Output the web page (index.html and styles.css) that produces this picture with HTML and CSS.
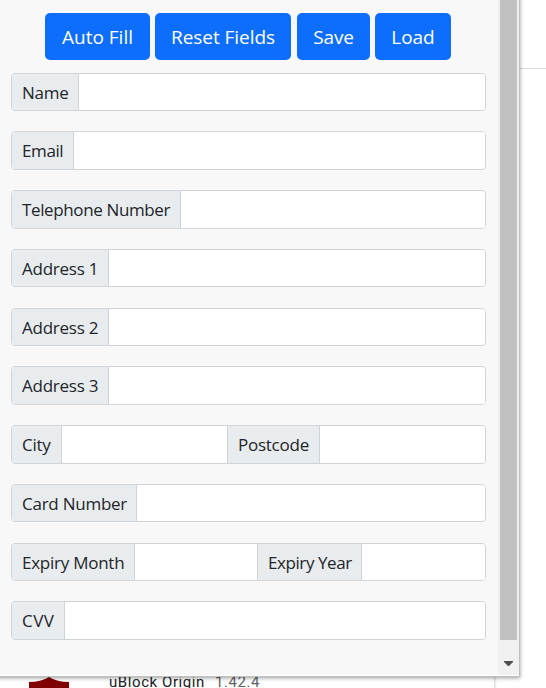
FILE: index.html
```html
<!DOCTYPE html>
<html lang="en">
<head>
<meta charset="utf-8">
<title>Auto Fill</title>
<link rel="stylesheet" href="styles.css">
</head>
<body>
<div class="toolbar-line"></div>
<section class="extension-card">
  <svg class="shield" width="40" height="11" viewBox="0 0 40 11"><path fill="#800000" d="M0 5Q12 5 20 0Q28 5 40 5V11H0Z"/></svg>
  <span class="ext-name">uBlock Origin</span><span class="ext-version">1.42.4</span>
</section>
<main class="popup">
  <div class="content">
    <div class="actions">
      <button class="btn autofill"><span>Auto Fill</span></button>
      <button class="btn reset"><span>Reset Fields</span></button>
      <button class="btn save"><span>Save</span></button>
      <button class="btn load"><span>Load</span></button>
    </div>
    <form class="fields">
      <div class="group"><label class="name">Name</label><input></div>
      <div class="group"><label class="email">Email</label><input></div>
      <div class="group"><label class="telephone">Telephone Number</label><input></div>
      <div class="group"><label class="address">Address 1</label><input></div>
      <div class="group"><label class="address">Address 2</label><input></div>
      <div class="group"><label class="address">Address 3</label><input></div>
      <div class="group"><label class="city">City</label><input><label class="postcode">Postcode</label><input></div>
      <div class="group"><label class="card">Card Number</label><input></div>
      <div class="group"><label class="month">Expiry Month</label><input><label class="year">Expiry Year</label><input></div>
      <div class="group"><label class="cvv">CVV</label><input></div>
    </form>
  </div>
  <div class="scrollbar">
    <div class="thumb"></div>
    <svg class="arrow" width="9" height="5" viewBox="0 0 9 5"><path fill="#505050" d="M0 0H9V1L5 5H4L0 1Z"/></svg>
  </div>
</main>
</body>
</html>
```
FILE: styles.css
```css
* { box-sizing: border-box; }
body {
  position: relative;
  width: 546px;
  height: 688px;
  margin: 0;
  overflow: hidden;
  background: #fff;
  font-family: "Open Sans", "Noto Sans", sans-serif;
}
.toolbar-line {
  position: absolute;
  top: 68px;
  left: 0;
  width: 100%;
  height: 1px;
  background: #dadce0;
}
.extension-card {
  position: absolute;
  top: 620px;
  left: -10px;
  width: 504px;
  height: 68px;
  padding: 57px 0 0 39px;
  display: flex;
  align-items: flex-start;
  background: #fff;
  box-shadow: 0 1px 2px rgba(60, 64, 67, .3), 0 1px 3px 1px rgba(60, 64, 67, .15);
  clip-path: inset(0 -4px 0 0);
  font: 15px/18px Roboto, sans-serif;
}
.shield { flex: none; }
.ext-name { margin: -4px 0 0 40px; color: #202124; letter-spacing: .58px; }
.ext-version { margin: -4px 0 0 10px; color: #5f6368; letter-spacing: .58px; }
.popup {
  position: absolute;
  top: -10px;
  left: -10px;
  width: 530px;
  height: 687px;
  padding: 10px 0 0 10px;
  display: flex;
  border-right: 1px solid #bebebe;
  border-bottom: 1px solid #bebebe;
  background: #fff;
  box-shadow: 0 1px 4px rgba(0, 0, 0, .4);
}
.content {
  width: 498px;
  height: 675px;
  padding: 13px 12px 0 11px;
  background: #f8f8f8;
}
.actions {
  display: flex;
  gap: 5px;
  height: 47px;
  margin-left: 34px;
}
.btn {
  height: 47px;
  padding: 1px 0 0;
  border: 0;
  border-radius: 5px;
  background: #0d6efd;
  color: #fff;
  font: 19px/28px "Open Sans", sans-serif;
  letter-spacing: -.05px;
  white-space: nowrap;
}
.btn.autofill { width: 105px; letter-spacing: 0; }
.btn.reset { width: 136px; }
.btn.save { width: 73px; margin-left: 1px; letter-spacing: -.2px; }
.btn.load { width: 76px; }
.fields { margin-top: 12.6px; }
.group {
  display: flex;
  height: 38.5px;
  margin-bottom: 20.25px;
  border: 1px solid #ced4da;
  border-radius: 4px;
  overflow: hidden;
  background: #fff;
}
.group label {
  flex: none;
  padding-left: 10px;
  border-right: 1px solid #ced4da;
  background: #e9ecef;
  color: #212529;
  font-size: 17px;
  line-height: 37px;
  letter-spacing: -.25px;
  white-space: nowrap;
}
.group input {
  flex: 1 1 0;
  min-width: 0;
  padding: 0;
  border: 0;
  background: #fff;
  outline: 0;
}
.group input + label { border-left: 1px solid #ced4da; }
.group .name { width: 67px; }
.group .email { width: 62px; letter-spacing: -.4px; }
.group .telephone { width: 169px; letter-spacing: -.37px; }
.group .address { width: 97px; }
.group .city { width: 50px; }
.group .postcode { width: 93px; }
.group .card { width: 125px; }
.group .month { width: 123px; }
.group .year { width: 105px; margin-left: -1px; letter-spacing: -.42px; }
.group .cvv { width: 53px; letter-spacing: .5px; }
.scrollbar {
  width: 21px;
  height: 675px;
  padding-left: 2px;
  background: #f0f0f0;
}
.thumb { width: 17px; height: 640px; background: #c1c1c1; }
.arrow { display: block; margin: 21px 0 0 4px; }
```
